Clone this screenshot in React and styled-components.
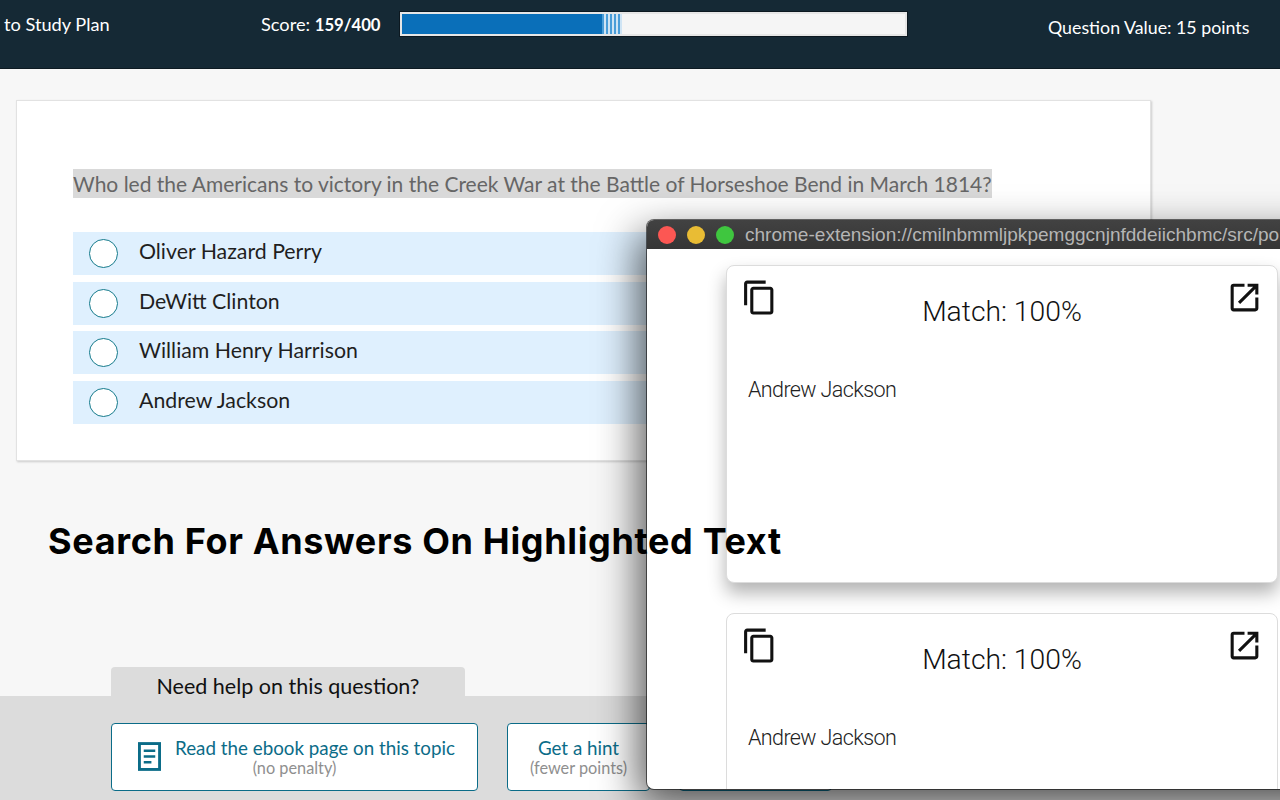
import React from "react";
import styled, { createGlobalStyle } from "styled-components";
import { MdContentCopy, MdOpenInNew } from "react-icons/md";

const GlobalStyle = createGlobalStyle`
  html, body {
    margin: 0;
    padding: 0;
    height: 800px;
    overflow: hidden;
    background: #f7f7f7;
    font-family: "Lato", "Noto Sans", sans-serif;
  }
  * { box-sizing: border-box; }
`;

const Page = styled.div`
  position: relative;
  width: 1280px;
  height: 800px;
  overflow: hidden;
  display: flex;
  flex-direction: column;
`;

const Header = styled.header`
  height: 69px;
  flex: none;
  background: #152935;
  border-bottom: 1px solid #0d1a22;
  color: #fff;
  font-size: 18.2px;
  display: flex;
  align-items: flex-start;
  padding-left: 4px;
`;

const BackLink = styled.div`
  width: 257px;
  margin-top: 13px;
`;

const Score = styled.div`
  width: 139px;
  margin-top: 13px;
  strong { font-weight: 700; font-size: 16.7px; }
`;

const ProgressBar = styled.div`
  width: 507px;
  height: 24px;
  margin-top: 12px;
  background: #f5f5f5;
  border: 2px solid #e6e6e6;
  box-shadow: 0 0 0 1px #0c1820;
  display: flex;
`;

const ProgressFill = styled.div`
  height: 100%;
  background: #0a6fb9;
`;

const ProgressStripes = styled.div`
  width: 20px;
  height: 100%;
  background: repeating-linear-gradient(90deg, #4a9dd8 0 2px, #cfe4f4 2px 4px);
`;

const QuestionValue = styled.div`
  margin-left: 141px;
  margin-top: 16px;
  font-size: 17.8px;
  white-space: nowrap;
`;

const QuestionCard = styled.section`
  width: 1135px;
  height: 361px;
  flex: none;
  margin: 31px 0 0 16px;
  padding: 68px 56px 0;
  background: #fff;
  border: 1px solid #e2e2e2;
  box-shadow: 1px 1px 2px rgba(0, 0, 0, 0.18);
`;

const QuestionText = styled.div`
  height: 29px;
  width: fit-content;
  margin-bottom: 34px;
  background: #d9d9d9;
  color: #666;
  font-size: 21px;
  line-height: 29px;
  white-space: nowrap;
`;

const Choices = styled.div`
  display: flex;
  flex-direction: column;
  gap: 6.67px;
`;

const Choice = styled.div`
  height: 43px;
  background: #dff0fe;
  display: flex;
  align-items: center;
  padding-left: 16px;
  font-size: 21.3px;
  color: #1f1f1f;
`;

const ChoiceLabel = styled.span`
  margin-top: -5px;
`;

const Radio = styled.span`
  width: 29px;
  height: 29px;
  flex: none;
  margin-right: 21px;
  border-radius: 50%;
  border: 1.6px solid #147a8c;
  background: #fff;
`;

const Title = styled.h1`
  position: relative;
  z-index: 3;
  margin: 58px 0 0 48px;
  font-family: "Inter", sans-serif;
  font-size: 36px;
  line-height: 44px;
  font-weight: 700;
  letter-spacing: 0.65px;
  color: #000;
  white-space: nowrap;
`;

const HelpBar = styled.div`
  margin-top: auto;
  height: 104px;
  flex: none;
  background: #dcdcdc;
  padding: 27px 0 0 111px;
  position: relative;
  display: flex;
  gap: 29px;
`;

const HelpTab = styled.div`
  position: absolute;
  left: 111px;
  top: -29px;
  width: 354px;
  height: 29px;
  background: #dcdcdc;
  border-radius: 4px 4px 0 0;
  text-align: center;
  font-size: 21.5px;
  line-height: 39px;
  color: #111;
`;

const HelpButton = styled.div`
  width: ${(p) => p.$width}px;
  height: 68px;
  flex: none;
  background: #fff;
  border: 1px solid #0b6c88;
  border-radius: 4px;
  display: grid;
  grid-template-columns: ${(p) => (p.$withIcon ? "63px 1fr 22px" : "1fr")};
  align-content: center;
  padding-bottom: 1px;
  color: #0b6c88;
  font-size: 18.8px;
  line-height: 24px;
  text-align: center;
  white-space: nowrap;
`;

const HelpIcon = styled.svg`
  grid-row: 1 / span 2;
  grid-column: 1;
  justify-self: end;
  align-self: center;
  margin-right: 14px;
`;

const HelpLabel = styled.div`
  grid-column: ${(p) => (p.$withIcon ? 2 : 1)};
  grid-row: 1;
`;

const HelpNote = styled.div`
  grid-column: 1 / -1;
  grid-row: 2;
  margin-top: -3px;
  font-size: 16.3px;
  line-height: 21px;
  color: #8f8f8f;
`;

const PopupWindow = styled.div`
  position: absolute;
  z-index: 2;
  left: 647px;
  top: 220px;
  width: 700px;
  height: 569px;
  background: #fff;
  border-radius: 7px 0 0 7px;
  overflow: hidden;
  box-shadow: -8px 14px 42px rgba(0, 0, 0, 0.65), 0 0 0 1px rgba(0, 0, 0, 0.55);
`;

const WindowBar = styled.div`
  height: 29px;
  background: linear-gradient(#424242, #353535);
  display: flex;
  align-items: center;
  padding: 1px 0 0 11px;
  gap: 11px;
  color: #b5b5b5;
  font-family: "Liberation Sans", Arial, sans-serif;
  font-size: 19.05px;
  white-space: nowrap;
`;

const Light = styled.span`
  width: 18px;
  height: 18px;
  flex: none;
  border-radius: 50%;
  background: ${(p) => p.$color};
`;

const CardList = styled.div`
  padding: 16px 0 0 79px;
  display: flex;
  flex-direction: column;
  gap: 30px;
`;

const MatchCard = styled.div`
  width: 552px;
  height: 318px;
  flex: none;
  background: #fff;
  border: 1px solid #dcdcdc;
  border-radius: 8px;
  box-shadow: ${(p) => (p.$raised ? "0 10px 18px rgba(0, 0, 0, 0.3)" : "none")};
  color: #222;
  font-family: "Roboto", sans-serif;
  font-weight: 300;
`;

const CardTop = styled.div`
  height: 83px;
  display: grid;
  grid-template-columns: 1fr auto 1fr;
  padding: 13px 14px 0 14px;
  color: #111;
`;

const MatchText = styled.div`
  font-size: 28.3px;
  line-height: 34px;
  padding-top: 16px;
`;

const RightIcon = styled.div`
  justify-self: end;
  svg { display: block; }
`;

const LeftIcon = styled.div`
  svg { display: block; }
`;

const AnswerText = styled.div`
  padding: 28px 0 0 21px;
  font-size: 21.5px;
  line-height: 26px;
  letter-spacing: -0.6px;
`;

const choices = [
  "Oliver Hazard Perry",
  "DeWitt Clinton",
  "William Henry Harrison",
  "Andrew Jackson",
];

function ResultCard({ raised }) {
  return (
    <MatchCard $raised={raised}>
      <CardTop>
        <LeftIcon>
          <MdContentCopy size={37} />
        </LeftIcon>
        <MatchText>Match: 100%</MatchText>
        <RightIcon>
          <MdOpenInNew size={37} />
        </RightIcon>
      </CardTop>
      <AnswerText>Andrew Jackson</AnswerText>
    </MatchCard>
  );
}

export default function App() {
  return (
    <Page>
      <GlobalStyle />
      <Header>
        <BackLink>to Study Plan</BackLink>
        <Score>
          Score: <strong>159/400</strong>
        </Score>
        <ProgressBar>
          <ProgressFill style={{ width: `${(159 / 400) * 100}%` }} />
          <ProgressStripes />
        </ProgressBar>
        <QuestionValue>Question Value: 15 points</QuestionValue>
      </Header>

      <QuestionCard>
        <QuestionText>
          Who led the Americans to victory in the Creek War at the Battle of Horseshoe Bend in March 1814?
        </QuestionText>
        <Choices>
          {choices.map((c) => (
            <Choice key={c}>
              <Radio />
              <ChoiceLabel>{c}</ChoiceLabel>
            </Choice>
          ))}
        </Choices>
      </QuestionCard>

      <Title>Search For Answers On Highlighted Text</Title>

      <HelpBar>
        <HelpTab>Need help on this question?</HelpTab>
        <HelpButton $width={367} $withIcon>
          <HelpIcon width="23" height="29" viewBox="0 0 24 30" fill="none" stroke="#0b6c88">
            <rect x="1.5" y="1.5" width="21" height="27" strokeWidth="3" />
            <path d="M6 9h12M6 15h12M6 21h8" strokeWidth="2.5" />
          </HelpIcon>
          <HelpLabel $withIcon>Read the ebook page on this topic</HelpLabel>
          <HelpNote>(no penalty)</HelpNote>
        </HelpButton>
        <HelpButton $width={143}>
          <HelpLabel>Get a hint</HelpLabel>
          <HelpNote>(fewer points)</HelpNote>
        </HelpButton>
        <HelpButton $width={153} />
      </HelpBar>

      <PopupWindow>
        <WindowBar>
          <Light $color="#fc5753" />
          <Light $color="#e9bc34" />
          <Light $color="#3fc63f" />
          <span>chrome-extension://cmilnbmmljpkpemggcnjnfddeiichbmc/src/popup.html</span>
        </WindowBar>
        <CardList>
          <ResultCard raised />
          <ResultCard />
        </CardList>
      </PopupWindow>
    </Page>
  );
}
